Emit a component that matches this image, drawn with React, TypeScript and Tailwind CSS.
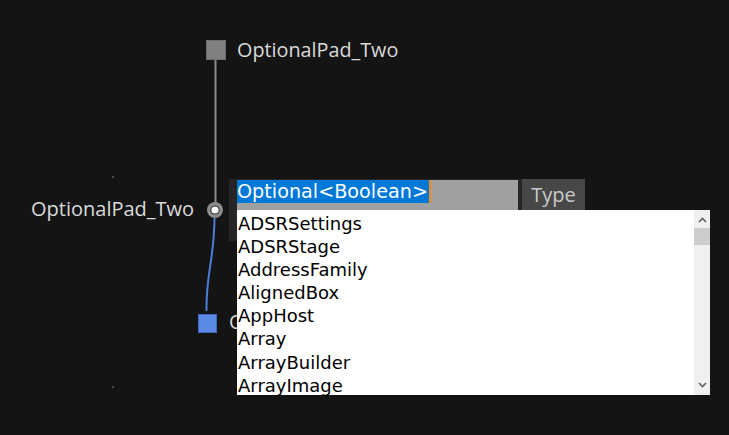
import React from 'react';

const types = [
  'ADSRSettings',
  'ADSRStage',
  'AddressFamily',
  'AlignedBox',
  'AppHost',
  'Array',
  'ArrayBuilder',
  'ArrayImage',
];

const label = { fontFamily: '"Open Sans", "Noto Sans", sans-serif' };
const mono = { fontFamily: '"DejaVu Sans", Verdana, sans-serif' };

const Chevron = ({ down }: { down?: boolean }) => (
  <svg width="9" height="6" viewBox="0 0 9 6" className="block">
    <path
      d={down ? 'M1 1 L4.5 4.5 L8 1' : 'M1 5 L4.5 1.5 L8 5'}
      fill="none"
      stroke="#606060"
      strokeWidth="1.6"
    />
  </svg>
);

export default function App() {
  return (
    <div className="relative w-[729px] h-[435px] overflow-hidden bg-[#141414]">
      {/* grid dots */}
      <div className="absolute left-[112px] top-[176px] w-[2px] h-[2px] bg-[#4a4a4a]" />
      <div className="absolute left-[112px] top-[386px] w-[2px] h-[2px] bg-[#4a4a4a]" />

      {/* wires */}
      <svg className="absolute inset-0" width="729" height="435">
        <line x1="215.5" y1="60" x2="215.5" y2="203" stroke="#8a8a8a" strokeWidth="2" />
        <path d="M214.5 218 C 214 262, 206 272, 206.5 311" fill="none" stroke="#4a7fd8" strokeWidth="2" />
        <circle cx="215" cy="210" r="8" fill="#8c8c8c" />
        <circle cx="215" cy="210" r="4.6" fill="#2b2b2b" />
        <circle cx="215" cy="210" r="3.6" fill="#ffffff" />
      </svg>

      {/* top node */}
      <div className="absolute left-[206px] top-[40px] flex items-center gap-[11px]">
        <div className="w-[20px] h-[20px] bg-[#808080] border border-[#6c6c6c]" />
        <span className="text-[19.8px] leading-none text-[#dadada]" style={label}>
          OptionalPad_Two
        </span>
      </div>

      {/* left pin label */}
      <div className="absolute left-[31px] top-[197px] text-[20px] leading-[24px] text-[#dadada]" style={label}>
        OptionalPad_Two
      </div>

      {/* bottom node, its label mostly hidden behind the list */}
      <div className="absolute left-[198px] top-[311px] flex items-center gap-[12px]">
        <div className="w-[19px] h-[19px] bg-[#5b8ae6] border border-[#3f68b8]" />
        <div className="w-[9px] overflow-hidden">
          <span className="text-[19.8px] leading-none text-[#dadada] whitespace-nowrap" style={label}>
            OptionalPad_Two
          </span>
        </div>
      </div>

      {/* type picker panel */}
      <div className="absolute left-[229px] top-[179px] w-[356px] h-[62px] bg-[#262626]">
        <div className="flex h-[31px] pt-[1px]">
          <div className="ml-[8px] w-[281px] h-[30px] bg-[#a0a0a0]">
            <div className="flex h-[23px]">
              <span className="h-[23px] bg-[#0078d7] text-white text-[19.2px] leading-[23px] pr-[1px]" style={mono}>
                Optional&lt;Boolean&gt;
              </span>
              <span className="w-[2px] h-[23px] bg-[#ff8a00]" />
            </div>
          </div>
          <div className="ml-[4px] w-[63px] h-[31px] -mt-[1px] bg-[#474747] flex items-center justify-center text-[20px] text-[#cacaca]" style={label}>
            Type
          </div>
        </div>
      </div>

      {/* dropdown list */}
      <div className="absolute left-[237px] top-[210px] w-[473px] h-[185px] bg-white flex">
        <div className="flex-1 pt-[2px] pl-[1px]">
          {types.map((t) => (
            <div key={t} className="text-[18px] leading-[23.1px] text-black whitespace-nowrap" style={mono}>
              {t}
            </div>
          ))}
        </div>
        <div className="w-[16px] h-full bg-[#f0f0f0] flex flex-col items-center">
          <div className="h-[18px] flex items-center justify-center pt-[2px]">
            <Chevron />
          </div>
          <div className="w-[16px] h-[17px] bg-[#cdcdcd]" />
          <div className="flex-1" />
          <div className="h-[18px] flex items-center justify-center pb-[2px]">
            <Chevron down />
          </div>
        </div>
      </div>
    </div>
  );
}
